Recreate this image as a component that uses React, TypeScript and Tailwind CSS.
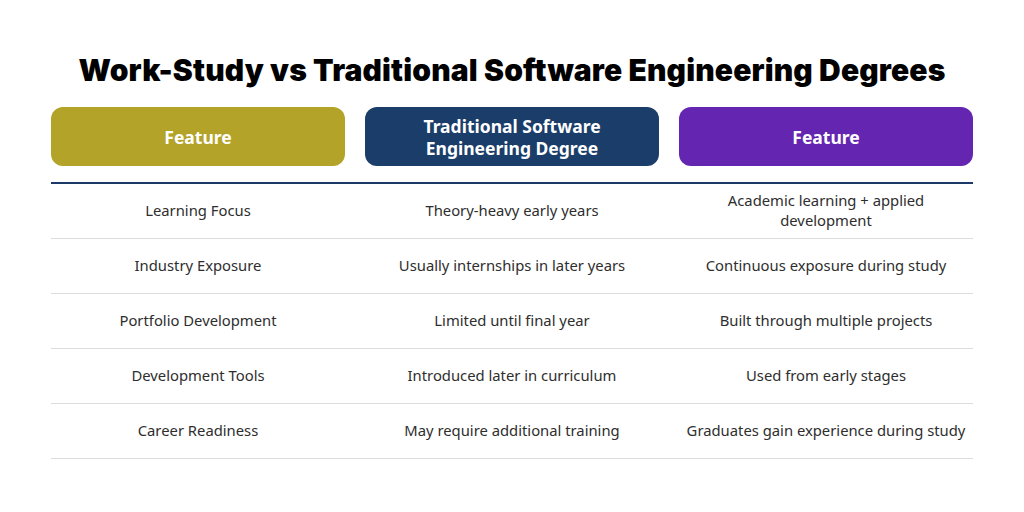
const headers = [
  { label: 'Feature', bg: 'bg-[#b3a329]' },
  { label: 'Traditional Software Engineering Degree', bg: 'bg-[#1b3d6a]' },
  { label: 'Feature', bg: 'bg-[#6425b1]' },
]

const rows: [string, string, string][] = [
  ['Learning Focus', 'Theory-heavy early years', 'Academic learning + applied development'],
  ['Industry Exposure', 'Usually internships in later years', 'Continuous exposure during study'],
  ['Portfolio Development', 'Limited until final year', 'Built through multiple projects'],
  ['Development Tools', 'Introduced later in curriculum', 'Used from early stages'],
  ['Career Readiness', 'May require additional training', 'Graduates gain experience during study'],
]

export default function App() {
  return (
    <div className="w-[1024px] h-[512px] bg-white flex flex-col items-center overflow-hidden">
      <h1 className="mt-[51px] h-[38px] text-[30px] leading-[38px] font-black tracking-[0.15px] text-black font-['Inter',sans-serif]">
        Work-Study vs Traditional Software Engineering Degrees
      </h1>
      <div className="mt-[18px] w-[922px] font-['Noto_Sans','Open_Sans',sans-serif]">
        <div className="grid grid-cols-3 gap-5">
          {headers.map((h, i) => (
            <div
              key={i}
              className={`${h.bg} h-[59px] rounded-xl flex items-center justify-center px-12 text-center text-white font-bold text-[17.5px] leading-[22px]`}
            >
              {h.label}
            </div>
          ))}
        </div>
        <div className="mt-[16px] h-[2px] bg-[#1b3966]" />
        {rows.map((r, i) => (
          <div key={i} className="grid grid-cols-3 gap-5 h-[55px] border-b border-[#dcdcdc] text-[14.8px] leading-[20px] text-[#2e2e2e]">
            {r.map((c, j) => (
              <div key={j} className="flex items-center justify-center text-center px-[46px] pb-[3px]">
                {j === 2 && i === 0 ? c : <span className="whitespace-nowrap">{c}</span>}
              </div>
            ))}
          </div>
        ))}
      </div>
    </div>
  )
}
